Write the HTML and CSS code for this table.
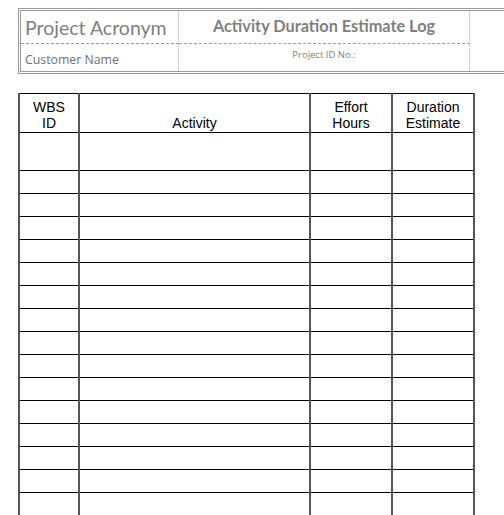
FILE: index.html
```html
<!DOCTYPE html>
<html>
<head>
<meta charset="utf-8">
<link rel="stylesheet" href="styles.css">
</head>
<body>
<div class="page">
  <div class="title-box">
    <div class="cell acronym">Project Acronym</div>
    <div class="cell doc-title">Activity Duration Estimate Log</div>
    <div class="cell spare"></div>
    <div class="cell customer">Customer Name</div>
    <div class="cell project-id">Project ID No.:</div>
    <div class="cell spare"></div>
  </div>

  <table class="log">
    <colgroup>
      <col class="c-wbs"><col class="c-act"><col class="c-eff"><col class="c-dur">
    </colgroup>
    <thead>
      <tr>
        <th>WBS<br>ID</th>
        <th>Activity</th>
        <th>Effort<br>Hours</th>
        <th>Duration<br>Estimate</th>
      </tr>
    </thead>
    <tbody>
      <tr class="tall"><td></td><td></td><td></td><td></td></tr>
      <tr><td></td><td></td><td></td><td></td></tr>
      <tr><td></td><td></td><td></td><td></td></tr>
      <tr><td></td><td></td><td></td><td></td></tr>
      <tr><td></td><td></td><td></td><td></td></tr>
      <tr><td></td><td></td><td></td><td></td></tr>
      <tr><td></td><td></td><td></td><td></td></tr>
      <tr><td></td><td></td><td></td><td></td></tr>
      <tr><td></td><td></td><td></td><td></td></tr>
      <tr><td></td><td></td><td></td><td></td></tr>
      <tr><td></td><td></td><td></td><td></td></tr>
      <tr><td></td><td></td><td></td><td></td></tr>
      <tr><td></td><td></td><td></td><td></td></tr>
      <tr><td></td><td></td><td></td><td></td></tr>
      <tr><td></td><td></td><td></td><td></td></tr>
      <tr><td></td><td></td><td></td><td></td></tr>
    </tbody>
  </table>
</div>
</body>
</html>
```

FILE: styles.css
```css
html, body {
  margin: 0;
  padding: 0;
  background: #fff;
  overflow: hidden;
}

.page {
  padding: 8px 0 0 18px;
  height: 507px;
  overflow: hidden;
}

.title-box {
  width: 486px;
  height: 66px;
  box-sizing: border-box;
  border: 3px double #9a9a9a;
  border-right: none;
  display: grid;
  grid-template-columns: 158px 291px 1fr;
  grid-template-rows: 33px 1fr;
  font-family: Lato, "Open Sans", sans-serif;
}

.cell {
  border-right: 1px dotted #b5b5b5;
  box-sizing: border-box;
}

.acronym,
.doc-title {
  border-bottom: 1px dashed #6aa5de;
}

.spare {
  border-right: none;
}

.acronym {
  font-size: 19.5px;
  color: #7f7f7f;
  padding: 6px 0 0 4px;
  line-height: 22px;
  white-space: nowrap;
}

.doc-title {
  font-size: 16.3px;
  font-weight: bold;
  color: #7f7f7f;
  text-align: center;
  padding-top: 5px;
  line-height: 20px;
  white-space: nowrap;
}

.customer {
  font-family: "Open Sans", sans-serif;
  font-size: 12.3px;
  color: #707070;
  padding: 9px 0 0 4px;
  line-height: 14px;
  white-space: nowrap;
}

.project-id {
  font-family: "Open Sans", sans-serif;
  font-size: 9.5px;
  color: #808080;
  text-align: center;
  padding-top: 5px;
  line-height: 12px;
  white-space: nowrap;
}

.log {
  margin-top: 19px;
  border-collapse: collapse;
  width: 456px;
  table-layout: fixed;
  font-family: "Liberation Sans", Arial, sans-serif;
}

.c-wbs { width: 60px; }
.c-act { width: 231px; }
.c-eff { width: 82px; }
.c-dur { width: 82px; }

.log th,
.log td {
  border: 1px solid #000;
  border-left: 2px solid #555;
  border-right: 2px solid #555;
  padding: 0;
}

.log th {
  font-weight: normal;
  font-size: 14px;
  line-height: 16px;
  height: 37px;
  vertical-align: bottom;
  text-align: center;
  color: #000;
  padding-bottom: 1px;
}

.log td {
  height: 22px;
}

.log tr.tall td {
  height: 37px;
}
```
